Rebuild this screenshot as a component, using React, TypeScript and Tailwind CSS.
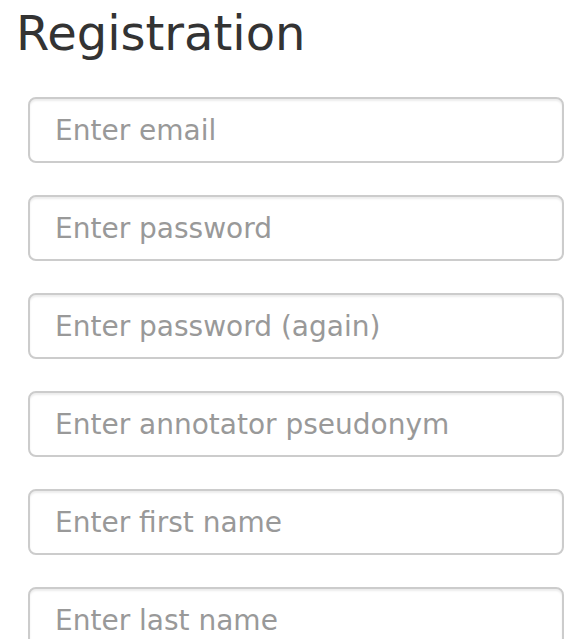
const fields = [
  'Enter email',
  'Enter password',
  'Enter password (again)',
  'Enter annotator pseudonym',
  'Enter first name',
  'Enter last name',
];

export default function App() {
  return (
    <div className="min-h-[639px] bg-white font-['DejaVu_Sans',Verdana,sans-serif]">
      <h2 className="pl-[16px] pt-[5px] text-[48px] leading-[56px] font-normal text-[#333]">Registration</h2>
      <form className="mt-[36px] ml-[28px] flex w-[536px] flex-col gap-[32px]">
        {fields.map((f) => (
          <input
            key={f}
            type="text"
            placeholder={f}
            className="h-[66px] w-full rounded-[8px] border-2 border-[#ccc] bg-white pl-[25px] pr-[23px] text-[28px] text-[#555] shadow-[inset_0_2px_2px_rgba(0,0,0,0.075)] outline-none placeholder:text-[#999]"
          />
        ))}
      </form>
    </div>
  );
}
